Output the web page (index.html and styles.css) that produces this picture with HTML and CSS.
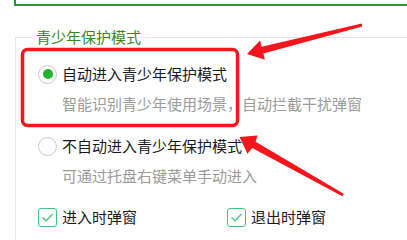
FILE: index.html
```html
<!DOCTYPE html>
<html lang="zh-CN">
<head>
<meta charset="utf-8">
<link rel="stylesheet" href="styles.css">
</head>
<body>
<div class="page">
  <div class="topbox"></div>
  <div class="group">
    <div class="legend"><span>青少年保护模式</span></div>
    <div class="option first">
      <span class="radio checked"><span class="dot"></span></span>
      <span class="label">自动进入青少年保护模式</span>
    </div>
    <div class="desc first-desc">智能识别青少年使用场景，自动拦截干扰弹窗</div>
    <div class="option second">
      <span class="radio"></span>
      <span class="label">不自动进入青少年保护模式</span>
    </div>
    <div class="desc">可通过托盘右键菜单手动进入</div>
    <div class="checks">
      <div class="check-item wide">
        <span class="checkbox"><svg viewBox="0 0 19 19" width="19" height="19"><path d="M5 9.8 L8.2 12.8 L14 6.6" fill="none" stroke="#5ccf8e" stroke-width="1.6" stroke-linecap="round" stroke-linejoin="round"/></svg></span>
        <span class="label">进入时弹窗</span>
      </div>
      <div class="check-item">
        <span class="checkbox"><svg viewBox="0 0 19 19" width="19" height="19"><path d="M5 9.8 L8.2 12.8 L14 6.6" fill="none" stroke="#5ccf8e" stroke-width="1.6" stroke-linecap="round" stroke-linejoin="round"/></svg></span>
        <span class="label">退出时弹窗</span>
      </div>
    </div>
  </div>
  <svg class="annot" viewBox="0 0 407 240" width="407" height="240">
    <rect x="22.5" y="49.5" width="215" height="76" rx="5" ry="5" fill="none" stroke="#f5161b" stroke-width="3.5"/>
    <polygon points="361.8,23.6 261.6,46.7 260.1,40.4 247,54 264.9,59.8 263.4,53.5 362.2,26.4" fill="#f5161b"/>
    <polygon points="343.7,193.8 255.6,141.85 257.5,135.5 239.5,137 247.5,153.8 252.2,147.95 342.3,196.2" fill="#f5161b"/>
  </svg>
</div>
</body>
</html>
```
FILE: styles.css
```css
html, body {
  margin: 0;
  padding: 0;
  background: #ffffff;
}
body {
  width: 407px;
  height: 240px;
  overflow: hidden;
  font-family: "Noto Sans CJK SC", "Noto Sans", sans-serif;
  font-size: 15px;
  line-height: 20px;
  color: #1a1a1a;
}
.page {
  position: relative;
  width: 407px;
  height: 240px;
  overflow: hidden;
}
.topbox {
  margin-left: 14px;
  width: 500px;
  height: 4px;
  border: 2px solid #1f9a35;
  border-top: 0;
}
.group {
  margin-top: 31px;
  margin-left: 15px;
  height: 300px;
  border-top: 1px solid #e6e6e6;
  border-left: 1px solid #e6e6e6;
}
.legend {
  margin-top: -11px;
  padding-left: 16px;
  height: 20px;
}
.legend span {
  display: inline-block;
  padding: 0 4px;
  background: #ffffff;
  color: #358a24;
}
.option {
  display: flex;
  align-items: center;
  padding-left: 22px;
  height: 20px;
}
.option.first {
  margin-top: 17px;
}
.option.second {
  margin-top: 22px;
}
.radio {
  box-sizing: border-box;
  width: 19px;
  height: 19px;
  border: 1.5px solid #cacaca;
  border-radius: 50%;
  background: #ffffff;
  display: flex;
  align-items: center;
  justify-content: center;
  margin-right: 5px;
}
.dot {
  width: 10px;
  height: 10px;
  border-radius: 50%;
  background: #23b42e;
}
.desc {
  padding-left: 46px;
  margin-top: 10px;
  color: #9b9b9b;
  height: 20px;
}
.checks {
  display: flex;
  padding-left: 22px;
  margin-top: 21px;
}
.check-item {
  display: flex;
  align-items: center;
  height: 20px;
}
.check-item.wide {
  width: 189px;
}
.checkbox {
  box-sizing: border-box;
  width: 19px;
  height: 19px;
  border: 1.5px solid #3ec47c;
  border-radius: 3px;
  margin-right: 5px;
  display: flex;
  align-items: center;
  justify-content: center;
  overflow: hidden;
}
.checkbox svg {
  flex: none;
}
.annot {
  position: absolute;
  left: 0;
  top: 0;
  pointer-events: none;
}
```
